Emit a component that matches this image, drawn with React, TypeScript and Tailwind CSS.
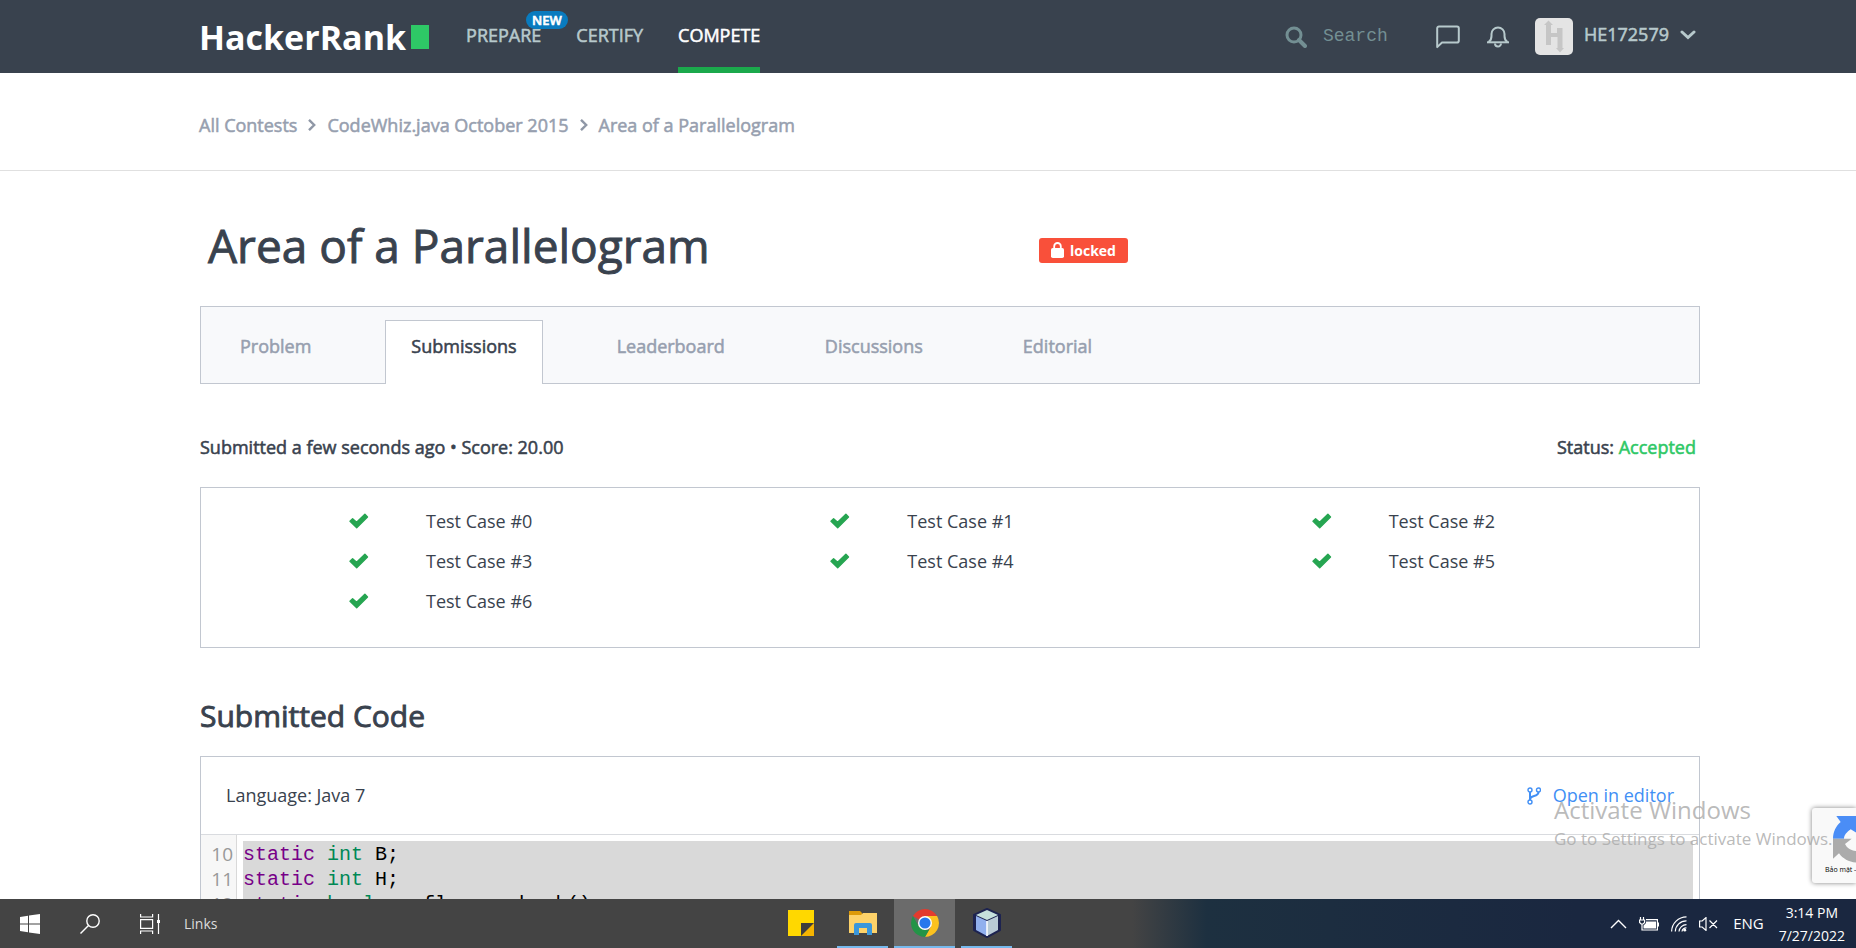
import type { ReactNode } from "react";

const navLinks = [
  { label: "PREPARE", active: false, isNew: true },
  { label: "CERTIFY", active: false, isNew: false },
  { label: "COMPETE", active: true, isNew: false },
];

const crumbs = ["All Contests", "CodeWhiz.java October 2015", "Area of a Parallelogram"];

const tabs = ["Problem", "Submissions", "Leaderboard", "Discussions", "Editorial"];

const testCases = [0, 1, 2, 3, 4, 5, 6];

const codeLines = [
  { no: 10, keyword: "static", type: "int", rest: "B;" },
  { no: 11, keyword: "static", type: "int", rest: "H;" },
  { no: 12, keyword: "static", type: "boolean", rest: "flag = check()" },
];

function SearchIcon() {
  return (
    <svg className="size-[22px]" viewBox="0 0 22 22" fill="none" stroke="currentColor" aria-hidden="true">
      <circle cx="9" cy="9" r="7" strokeWidth="3" />
      <path d="M14 14l6 6" strokeWidth="4" strokeLinecap="round" />
    </svg>
  );
}

function ChatIcon() {
  return (
    <svg className="size-6" viewBox="0 0 24 24" fill="none" stroke="currentColor" strokeWidth="2" strokeLinejoin="round" aria-hidden="true">
      <path d="M3 1.5h18a1.8 1.8 0 0 1 1.8 1.8v12.4a1.8 1.8 0 0 1-1.8 1.8H6l-4.8 4.6V3.3A1.8 1.8 0 0 1 3 1.5z" />
    </svg>
  );
}

function BellIcon() {
  return (
    <svg className="size-[22px]" viewBox="0 0 22 22" fill="none" stroke="currentColor" strokeWidth="2" aria-hidden="true">
      <path d="M0 16.3h22" />
      <path d="M1.5 16c2.400-1.400 3-3 3-6V8a6.500 6.500 0 0 1 13 0v2c0 3 .6 4.600 3 6" />
      <path d="M8 17.500a3 3 0 0 0 6 0" />
    </svg>
  );
}

function Avatar() {
  return (
    <svg className="h-[37px] w-[38px]" viewBox="0 0 38 37" aria-hidden="true">
      <rect width="38" height="37" rx="5" fill="#e4e4e4" />
      <path
        d="M13.500 2.500l4.500 4.500h-2v8h6V10h5.500v20H29l-4 4.500-4-4.500h1.500V19H16v8h-5V7H9z"
        fill="#c6c6c6"
      />
    </svg>
  );
}

function ChevronDown() {
  return (
    <svg className="mb-1 h-[10px] w-4" viewBox="0 0 16 10" fill="none" stroke="currentColor" strokeWidth="3" strokeLinecap="round" aria-hidden="true">
      <path d="M2 2l6 5.500L14 2" />
    </svg>
  );
}

function ChevronRight() {
  return (
    <svg className="h-3 w-2" viewBox="0 0 8 12" fill="none" stroke="#8f97a6" strokeWidth="2.400" aria-hidden="true">
      <path d="M1 .8L6.200 6 1 11.200" />
    </svg>
  );
}

function CheckIcon() {
  return (
    <svg className="mr-[57px] h-4 w-5" viewBox="0 0 20 16" fill="#26a551" stroke="#26a551" strokeWidth="1.400" strokeLinejoin="round" aria-hidden="true">
      <path d="M1 8.300L3.600 5.700 7.600 9.300 15.900 1.200 18.500 3.900 7.700 14.700z" />
    </svg>
  );
}

function LockIcon() {
  return (
    <svg className="h-4 w-[13px]" viewBox="0 0 13 16" aria-hidden="true">
      <path d="M3.200 7V4.300a3.300 3.300 0 0 1 6.600 0V7" fill="none" stroke="#fff" strokeWidth="1.800" />
      <rect y="6" width="13" height="10" rx="1.800" fill="#fff" />
    </svg>
  );
}

function BranchIcon() {
  return (
    <svg className="h-[18px] w-[14px]" viewBox="0 0 14 18" fill="none" stroke="currentColor" strokeWidth="1.400" aria-hidden="true">
      <circle cx="3" cy="3" r="2" />
      <circle cx="11.500" cy="3" r="2" />
      <circle cx="3" cy="15" r="2" />
      <path d="M3 5v8M3.200 12c0-4.500 8.300-1.500 8.300-7" strokeWidth="2" />
    </svg>
  );
}

function Header() {
  return (
    <header className="flex h-[73px] shrink-0 items-stretch bg-[#39424e] pr-[160px] pl-[199px] text-[#b7c9cc]">
      <a href="#home" className="flex items-center gap-[5px] text-white">
        <span className="text-[34px] leading-none font-bold">HackerRank</span>
        <span className="h-6 w-[18px] bg-[#2ec866]" />
      </a>
      <nav className="ml-[37px] flex gap-[35px]">
        {navLinks.map((link) => (
          <a
            key={link.label}
            href={"#" + link.label.toLowerCase()}
            className={
              link.active
                ? "relative flex items-center border-b-[6px] border-[#1ba94c] pt-1 text-[18px] text-white [-webkit-text-stroke:0.03em]"
                : "relative flex items-center border-b-[6px] border-transparent pt-1 text-[18px] [-webkit-text-stroke:0.03em]"
            }
          >
            {link.label}
            {link.isNew && (
              <span className="absolute top-[11px] left-[60px] rounded-full bg-[#097bbf] px-[6px] text-[13px] leading-[18px] font-semibold text-white">
                NEW
              </span>
            )}
          </a>
        ))}
      </nav>
      <div className="ml-auto flex items-center">
        <label className="flex items-center gap-4 text-[#738f93]">
          <SearchIcon />
          <input
            type="text"
            placeholder="Search"
            aria-label="Search"
            className="w-[113px] bg-transparent font-['Liberation_Mono',monospace] text-[18px] placeholder:text-[#738f93] focus:outline-none"
          />
        </label>
        <button type="button" aria-label="Messages">
          <ChatIcon />
        </button>
        <button type="button" aria-label="Notifications" className="ml-[27px]">
          <BellIcon />
        </button>
        <button type="button" className="ml-[26px] flex items-center text-[18px]">
          <Avatar />
          <span className="mr-[11px] ml-[11px] pb-1 [-webkit-text-stroke:0.03em]">HE172579</span>
          <ChevronDown />
        </button>
      </div>
    </header>
  );
}

function Breadcrumbs() {
  return (
    <nav aria-label="Breadcrumb" className="border-b border-[#e0e0e0] pt-[39px] pb-[32px] pl-[199px]">
      <ol className="flex items-center text-[18px] leading-[26px] text-[#979faf] [-webkit-text-stroke:0.03em]">
        {crumbs.map((crumb, i) => (
          <li key={crumb} className="flex items-center">
            {i > 0 && (
              <span className="mx-[11px]">
                <ChevronRight />
              </span>
            )}
            <a href="#crumb">{crumb}</a>
          </li>
        ))}
      </ol>
    </nav>
  );
}

function Tabs() {
  return (
    <nav className="flex h-[78px] gap-12 border border-[#c2c7d0] bg-[#f8f9fb] pl-[13px] text-[18px] [-webkit-text-stroke:0.03em]">
      {tabs.map((tab) =>
        tab === "Submissions" ? (
          <a
            key={tab}
            href="#submissions"
            aria-current="page"
            className="mt-[13px] -mb-px border border-b-0 border-[#c2c7d0] bg-white px-[25px] pt-3 text-[#39424e]"
          >
            {tab}
          </a>
        ) : (
          <a key={tab} href={"#" + tab.toLowerCase()} className="mt-[14px] px-[26px] pt-3 text-[#979faf]">
            {tab}
          </a>
        )
      )}
    </nav>
  );
}

function Results() {
  return (
    <ul className="mt-[27px] grid grid-cols-3 gap-y-[14px] border border-[#c2c7d0] pt-5 pr-[54px] pb-[33px] text-[18px] leading-[26px]">
      {testCases.map((n) => (
        <li key={n} className="flex items-center pl-[148px]">
          <CheckIcon />
          Test Case #{n}
        </li>
      ))}
    </ul>
  );
}

function SubmittedCode() {
  return (
    <section className="border border-[#c2c7d0]">
      <div className="flex h-[78px] items-center justify-between border-b border-[#d9dbdf] px-[25px] text-[18px]">
        <span>Language: Java 7</span>
        <a href="#editor" className="flex items-center gap-3 text-[#418ff5]">
          <BranchIcon />
          Open in editor
        </a>
      </div>
      <div className="flex text-[19px] leading-[25px]">
        <div className="w-9 shrink-0 border-r border-[#d9d9d9] bg-[#f7f7f7] pt-[7px] pr-[3px] text-right text-[#999]">
          {codeLines.map((line) => (
            <div key={line.no}>{line.no}</div>
          ))}
        </div>
        <pre className="mt-[6px] mr-[6px] ml-[6px] flex-1 bg-[#d9d9d9] pt-px font-['Liberation_Mono',monospace] text-[20px] text-black">
          {codeLines.map((line) => (
            <div key={line.no}>
              <span className="text-[#770088]">{line.keyword}</span>{" "}
              <span className="text-[#008855]">{line.type}</span> {line.rest}
            </div>
          ))}
        </pre>
      </div>
    </section>
  );
}

function Recaptcha() {
  return (
    <div className="absolute right-0 bottom-4 h-[75px] w-[44px] overflow-hidden rounded-l-[3px] bg-[#f9f9f9] shadow-[0_0_5px_gray]">
      <svg className="mt-2 ml-[21px] h-[48px] w-[48px]" viewBox="0 0 48 48" aria-hidden="true">
        <path d="M0 22.700C0 16 3 10 7.700 6L3.300 0H24v17l-6.300-3.700C14 16 11 19 11 22.700z" fill="#4a8df6" />
        <path d="M0 22.700h18.700L12 28c2 4 6 7 12 7v11.700C16 46 10 43 6 37.300L0 42.700z" fill="#ababab" />
      </svg>
      <p className="ml-[13px] w-[80px] text-[7px] leading-[12px] text-black">Bảo mật - Điều khoản</p>
    </div>
  );
}

function TaskButton({ label, state, children }: { label: string; state: "idle" | "open" | "active"; children: ReactNode }) {
  return (
    <button
      type="button"
      aria-label={label}
      className={
        state === "active"
          ? "flex w-[61px] items-center justify-center border-b-2 border-[#76b9ed] bg-[#6b6b6b]"
          : state === "open"
            ? "mx-[6px] flex w-[51px] items-center justify-center border-b-2 border-[#76b9ed]"
            : "flex w-[61px] items-center justify-center border-b-2 border-transparent"
      }
    >
      {children}
    </button>
  );
}

function Taskbar() {
  return (
    <footer className="flex h-[49px] shrink-0 bg-[linear-gradient(90deg,#444444_0%,#444444_61%,#1d3040_65%,#1a2740_85%,#1a2740_100%)] text-white">
      <div className="flex w-[770px] shrink-0 items-center pl-5">
        <button type="button" aria-label="Start">
          <svg className="size-5" viewBox="0 0 20 20" fill="#fff" aria-hidden="true">
            <path d="M0 3l8-1.200V9.500H0zM9 1.600L20 0v9.500H9zM0 10.500h8v7.700L0 17zM9 10.500h11V20L9 18.400z" />
          </svg>
        </button>
        <button type="button" aria-label="Search Windows" className="ml-10">
          <svg className="size-5" viewBox="0 0 20 20" fill="none" stroke="#fff" strokeWidth="1.400" aria-hidden="true">
            <circle cx="13" cy="7" r="6.200" />
            <path d="M8.500 11.500L.5 19.500" />
          </svg>
        </button>
        <button type="button" aria-label="Task view" className="ml-10">
          <svg className="size-5" viewBox="0 0 20 20" fill="none" stroke="#fff" strokeWidth="1.200" aria-hidden="true">
            <path d="M.6 0v3h12V0M.6 20v-3h12v3M.6 5.600h12v8.800H.6zM18.500 0v20" />
            <path d="M17 6h3v3h-3z" fill="#fff" stroke="none" />
          </svg>
        </button>
        <span className="ml-6 text-[14px] text-[#dddddd]">Links</span>
      </div>
      <div className="flex">
        <TaskButton label="Sticky Notes" state="idle">
          <svg className="size-[26px]" viewBox="0 0 26 26" aria-hidden="true">
            <path d="M0 0h26v13H13v13H0z" fill="#ffd800" />
            <path d="M13 13h13L13 26z" fill="#3d3d3d" />
            <path d="M26 13v13H13z" fill="#f5b400" />
          </svg>
        </TaskButton>
        <TaskButton label="File Explorer" state="open">
          <svg className="h-6 w-7" viewBox="0 0 28 24" aria-hidden="true">
            <path d="M0 0h11l2 2v4H0z" fill="#dd9a08" />
            <path d="M0 4h12l2-2h14v20H0z" fill="#fdd269" />
            <path d="M5 24V14a2 2 0 0 1 2-2h14a2 2 0 0 1 2 2v10h-5v-7h-8v7z" fill="#3a97dc" />
          </svg>
        </TaskButton>
        <TaskButton label="Chrome" state="active">
          <svg className="size-7" viewBox="0 0 28 28" aria-hidden="true">
            <path d="M14 14L1.900 7A14 14 0 0 1 26.100 7z" fill="#e33b2e" />
            <path d="M26.100 7A14 14 0 0 1 14 28l6-10.500L14 7z" fill="#fcc21f" />
            <path d="M14 28A14 14 0 0 1 1.900 7l6 10.500L14 21l4 0z" fill="#239447" />
            <circle cx="14" cy="14" r="7" fill="#fff" />
            <circle cx="14" cy="14" r="5.600" fill="#2678ec" />
          </svg>
        </TaskButton>
        <TaskButton label="NetBeans" state="open">
          <svg className="h-[30px] w-7" viewBox="0 0 28 30" strokeLinejoin="round" aria-hidden="true">
            <path d="M14 1l13 6v15l-13 7L1 22V7z" fill="#1d2350" stroke="#1d2350" strokeWidth="2" />
            <path d="M14 2l11 5-11 5L3 7z" fill="#c5e0dc" />
            <path d="M3 8l11 5v15L3 22z" fill="#91b0ee" />
            <path d="M25 8l-11 5v15l11-6z" fill="#b9cbd6" />
            <path d="M14 13v15" stroke="#fff" strokeWidth="1.500" />
          </svg>
        </TaskButton>
      </div>
      <div className="flex flex-1 items-center justify-end gap-3 pr-[11px]">
        <svg className="h-[10px] w-[17px]" viewBox="0 0 17 10" fill="none" stroke="#fff" strokeWidth="1.400" aria-hidden="true">
          <path d="M1 9l7.500-7.500L16 9" />
        </svg>
        <svg className="h-[14px] w-5" viewBox="0 0 20 14" fill="none" stroke="#fff" strokeWidth="1.200" aria-hidden="true">
          <path d="M1.500 0v3M4.500 0v3M.6 3h5v2.500l-1.500 1.500H2.100L.6 5.500zM3 7v6h15.400V2.600H7" />
          <path d="M7 4.500h10v7H4.500V8.500L7 6zM19 5.500h1v4h-1z" fill="#fff" stroke="none" />
        </svg>
        <svg className="size-4" viewBox="0 0 16 16" fill="none" stroke="#fff" strokeWidth="1.200" aria-hidden="true">
          <path d="M.6 15.500A15 15 0 0 1 15.500.8M4.300 15.500A11 11 0 0 1 15.500 4.800M8 15.500A7.500 7.500 0 0 1 15.500 8.600M11 15.500a4 4 0 0 1 4.500-3.500" />
          <circle cx="13.800" cy="14.200" r="1.400" fill="#fff" stroke="none" />
        </svg>
        <svg className="h-[14px] w-[19px]" viewBox="0 0 19 14" fill="none" stroke="#fff" strokeWidth="1.200" aria-hidden="true">
          <path d="M.6 4v6h2.600L7 13.400V.6L3.200 4zM10.500 3.500l7.500 7.500M18 3.500L10.500 11" />
        </svg>
        <span className="ml-[3px] text-[15px]">ENG</span>
        <div className="ml-[3px] text-center text-[14px] leading-[23px]">
          <div>3:14 PM</div>
          <div>7/27/2022</div>
        </div>
      </div>
    </footer>
  );
}

export default function App() {
  return (
    <div className="flex h-screen flex-col bg-white font-['Open_Sans','Noto_Sans',sans-serif] text-[#39424e]">
      <div className="relative flex min-h-0 flex-1 flex-col overflow-hidden">
        <Header />
        <Breadcrumbs />
        <main className="pr-[156px] pl-[200px]">
          <div className="flex items-center pt-[42px] pb-[29px] pl-2">
            <h1 className="w-[831px] text-[46px] leading-[64px] [-webkit-text-stroke:0.02em]">Area of a Parallelogram</h1>
            <span className="mt-[10px] flex h-[25px] items-center gap-[6px] rounded-[3px] bg-[#f9503a] px-3 text-[14px] font-bold text-white">
              <LockIcon />
              locked
            </span>
          </div>
          <Tabs />
          <div className="flex justify-between pt-[50px] pr-1 text-[18px] leading-[26px] [-webkit-text-stroke:0.03em]">
            <p>Submitted a few seconds ago • Score: 20.00</p>
            <p>
              Status: <span className="text-[#2ec866]">Accepted</span>
            </p>
          </div>
          <Results />
          <h2 className="mt-[46px] mb-[18px] text-[30px] leading-[44px] [-webkit-text-stroke:0.03em]">Submitted Code</h2>
          <SubmittedCode />
        </main>
        <Recaptcha />
        <div className="pointer-events-none absolute right-[17px] bottom-[47px] w-[285px] whitespace-nowrap text-[#a8a8a8]/80">
          <p className="text-[24px] leading-[32px]">Activate Windows</p>
          <p className="text-[17px] leading-[26px]">Go to Settings to activate Windows.</p>
        </div>
      </div>
      <Taskbar />
    </div>
  );
}
